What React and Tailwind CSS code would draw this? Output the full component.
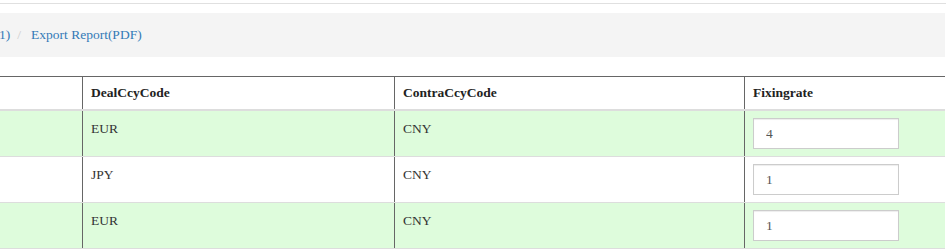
const rows = [
  { deal: "EUR", contra: "CNY", rate: "4", green: true },
  { deal: "JPY", contra: "CNY", rate: "1", green: false },
  { deal: "EUR", contra: "CNY", rate: "1", green: true },
];

export default function App() {
  return (
    <div className="w-[946px] h-[250px] overflow-hidden bg-white text-[13.5px] text-[#333] [font-family:'Liberation_Serif',serif]">
      <div className="h-[3px]" />
      <div className="h-px bg-[#e0e0e0]" />

      {/* Breadcrumb */}
      <div className="mt-[9px] mr-px h-[44px] bg-[#f4f4f4] flex items-center">
        <span className="text-[#337ab7] -ml-[1px]">1)</span>
        <span className="text-[#ccc] pl-[7px] pr-[10px]">/</span>
        <a className="text-[#337ab7]">Export Report(PDF)</a>
      </div>

      {/* Table */}
      <div className="mt-[19px] border-t border-[#666] mr-px">
        <div className="grid grid-cols-[83px_312px_350px_1fr] border-b-2 border-[#ddd]">
          <div className="h-[32px] border-r border-[#666]" />
          <div className="h-[32px] border-r border-[#666] pl-2 flex items-center font-semibold text-[#222]">
            DealCcyCode
          </div>
          <div className="h-[32px] border-r border-[#666] pl-2 flex items-center font-semibold text-[#222]">
            ContraCcyCode
          </div>
          <div className="h-[32px] pl-2 flex items-center font-semibold text-[#222]">
            Fixingrate
          </div>
        </div>
        {rows.map((r, i) => (
          <div
            key={i}
            className={
              "grid grid-cols-[83px_312px_350px_1fr] border-b border-[#ddd] " +
              (r.green ? "bg-[#defcdc]" : "bg-white")
            }
          >
            <div className="h-[45px] border-r border-[#666]" />
            <div className="h-[45px] border-r border-[#666] pl-2 pt-[8px]">{r.deal}</div>
            <div className="h-[45px] border-r border-[#666] pl-2 pt-[8px]">{r.contra}</div>
            <div className="h-[45px] pl-2 pt-[7px]">
              <input
                readOnly
                value={r.rate}
                className="w-[146px] h-[31px] bg-white border border-[#ccc] px-3 text-[13.5px] text-[#555] outline-none shadow-[inset_0_1px_1px_rgba(0,0,0,0.075)]"
              />
            </div>
          </div>
        ))}
      </div>
    </div>
  );
}
